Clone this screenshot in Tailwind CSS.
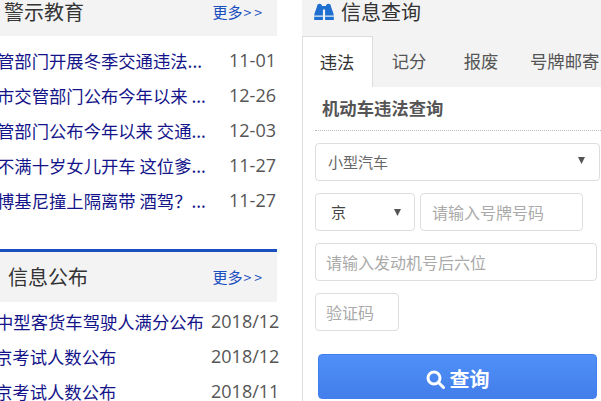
<!DOCTYPE html>
<html lang="zh">
<head>
<meta charset="utf-8">
<script src="https://cdn.jsdelivr.net/npm/@tailwindcss/browser@4"></script>
</head>
<body class="bg-white">
<div class="flex w-[601px] h-[401px] overflow-hidden font-['Noto_Sans_CJK_SC',sans-serif] gap-[25px]">
  <!-- left column -->
  <div class="w-[277px] shrink-0 flex flex-col">
    <div class="h-[36px] shrink-0 bg-[#f3f3f3] flex items-start justify-between pl-[4px] pr-[15px]">
      <span class="text-[20px] leading-[24px] text-[#333]">警示教育</span>
      <a class="text-[15px] leading-[24px] text-[#1a4fc0] whitespace-nowrap">更多<span class="tracking-[3px] -mr-[3px] text-[14px] ml-[1px]">&gt;&gt;</span></a>
    </div>
    <ul class="pt-[7px] shrink-0">
      <li class="h-[35px] flex items-center justify-between text-[17.33px] whitespace-nowrap"><a class="text-[#14148a] -ml-[3px]">管部门开展冬季交通违法...</a><span class="text-[#555] text-[18px] font-['Open_Sans',sans-serif] mr-[1px]">11-01</span></li>
      <li class="h-[35px] flex items-center justify-between text-[17.33px] whitespace-nowrap"><a class="text-[#14148a] -ml-[3px]">市交管部门公布今年以来 ...</a><span class="text-[#555] text-[18px] font-['Open_Sans',sans-serif] mr-[1px]">12-26</span></li>
      <li class="h-[35px] flex items-center justify-between text-[17.33px] whitespace-nowrap"><a class="text-[#14148a] -ml-[3px]">管部门公布今年以来 交通...</a><span class="text-[#555] text-[18px] font-['Open_Sans',sans-serif] mr-[1px]">12-03</span></li>
      <li class="h-[35px] flex items-center justify-between text-[17.33px] whitespace-nowrap"><a class="text-[#14148a] -ml-[3px]">不满十岁女儿开车 这位爹...</a><span class="text-[#555] text-[18px] font-['Open_Sans',sans-serif] mr-[1px]">11-27</span></li>
      <li class="h-[35px] flex items-center justify-between text-[17.33px] whitespace-nowrap"><a class="text-[#14148a] -ml-[3px]">博基尼撞上隔离带 酒驾？...</a><span class="text-[#555] text-[18px] font-['Open_Sans',sans-serif] mr-[1px]">11-27</span></li>
    </ul>
    <div class="mt-[31px] shrink-0 border-t-[3px] border-[#1a4fc0] h-[53px] bg-[#f3f3f3] flex items-center justify-between pl-[8px] pr-[15px]">
      <span class="text-[20px] leading-[24px] text-[#333]">信息公布</span>
      <a class="text-[15px] leading-[24px] text-[#1a4fc0] whitespace-nowrap">更多<span class="tracking-[3px] -mr-[3px] text-[14px] ml-[1px]">&gt;&gt;</span></a>
    </div>
    <ul class="pt-[2px] shrink-0">
      <li class="h-[35px] flex items-center text-[17.33px] whitespace-nowrap"><a class="text-[#14148a] -ml-[4px] w-[215px] shrink-0">中型客货车驾驶人满分公布</a><span class="text-[#555] text-[18px] font-['Open_Sans',sans-serif]">2018/12</span></li>
      <li class="h-[35px] flex items-center text-[17.33px] whitespace-nowrap"><a class="text-[#14148a] -ml-[5px] w-[216px] shrink-0">京考试人数公布</a><span class="text-[#555] text-[18px] font-['Open_Sans',sans-serif]">2018/12</span></li>
      <li class="h-[35px] flex items-center text-[17.33px] whitespace-nowrap"><a class="text-[#14148a] -ml-[5px] w-[216px] shrink-0">京考试人数公布</a><span class="text-[#555] text-[18px] font-['Open_Sans',sans-serif]">2018/11</span></li>
    </ul>
  </div>
  <!-- right column -->
  <div class="w-[299px] shrink-0 flex flex-col">
    <div class="bg-[#f3f3f3] h-[36px] flex items-start pl-[12px] gap-[7px]">
      <svg class="w-[20px] h-[18px] shrink-0 mt-[3px]" viewBox="0 0 20 18" fill="#1f6fd1" aria-hidden="true">
        <path d="M3 3.500C3 1.500 4.500.8 5.600.8S8 1.500 8 3v1.200c.6.200.9.800.9 1.300V17H.2v-3.800C.2 10 2 7 3 3.500Z"/>
        <path d="M17 3.500C17 1.500 15.500.8 14.400.8S12 1.500 12 3v1.200c-.6.200-.9.800-.9 1.300V17h8.700v-3.800C19.800 10 18 7 17 3.500Z"/>
        <path d="M8 3h4v3.500H8z"/>
        <path d="M.2 12.500h8.700v1.300H.2zM11.100 12.500h8.700v1.300h-8.700z" fill="#e6eef8"/>
      </svg>
      <span class="text-[20px] leading-[24px] text-[#333]">信息查询</span>
    </div>
    <div class="bg-[#f3f3f3] h-[51px] flex text-[17.33px] text-[#555] whitespace-nowrap">
      <div class="w-[71px] shrink-0 h-[51px] bg-white border border-b-0 border-[#ddd] flex items-center justify-center pr-[1px] pb-[1px] text-[#333]">违法</div>
      <div class="w-[72px] shrink-0 flex items-center justify-center pb-[1px]">记分</div>
      <div class="w-[72px] shrink-0 flex items-center justify-center pb-[1px]">报废</div>
      <div class="pl-[13px] flex items-center pb-[1px]">号牌邮寄</div>
    </div>
    <div class="flex-1 border-l border-[#ddd] pl-[12px]">
      <div class="h-[44px] border-b border-dotted border-[#bbb] flex items-center pl-[7px] pb-[1px] text-[17.33px] font-bold text-[#555]">机动车违法查询</div>
      <div class="mt-[12px] w-[285px] h-[38px] border border-[#ddd] rounded-[4px] flex items-center justify-between pl-[12px] pr-[14px] text-[15px] text-[#666]">
        <span>小型汽车</span>
        <svg class="w-[7px] h-[7px] -mt-[3px]" viewBox="0 0 7 7" fill="#555" aria-hidden="true"><path d="M0 0h7L3.500 7Z"/></svg>
      </div>
      <div class="mt-[12px] flex gap-[5px]">
        <div class="w-[100px] h-[38px] border border-[#ddd] rounded-[4px] flex items-center justify-between pl-[15px] pr-[13px] text-[15px] text-[#444]">
          <span>京</span>
          <svg class="w-[7px] h-[7px]" viewBox="0 0 7 7" fill="#555" aria-hidden="true"><path d="M0 0h7L3.500 7Z"/></svg>
        </div>
        <input class="w-[163px] h-[38px] border border-[#ddd] rounded-[4px] pl-[11px] text-[16px] placeholder:text-[#aaa] outline-none" placeholder="请输入号牌号码">
      </div>
      <div class="mt-[12px]">
        <input class="block w-[282px] h-[38px] border border-[#ddd] rounded-[4px] pl-[10px] text-[16px] placeholder:text-[#aaa] outline-none" placeholder="请输入发动机号后六位">
      </div>
      <div class="mt-[12px]">
        <input class="block w-[84px] h-[38px] border border-[#ddd] rounded-[4px] pl-[10px] text-[16px] placeholder:text-[#aaa] outline-none" placeholder="验证码">
      </div>
      <button class="mt-[23px] ml-[3px] w-[279px] h-[45px] rounded-[4px] border border-[#3f7fee] bg-gradient-to-b from-[#5090f8] to-[#437eea] flex items-center justify-center gap-[5px] pt-[5px] text-white text-[20px] font-bold">
        <svg class="w-[19px] h-[19px]" viewBox="0 0 19 19" fill="none" stroke="#fff" stroke-width="3" aria-hidden="true"><circle cx="8" cy="8" r="6"/><path d="M12.500 12.500 17.500 17.500" stroke-linecap="round"/></svg>
        <span>查询</span>
      </button>
    </div>
  </div>
</div>
</body>
</html>
